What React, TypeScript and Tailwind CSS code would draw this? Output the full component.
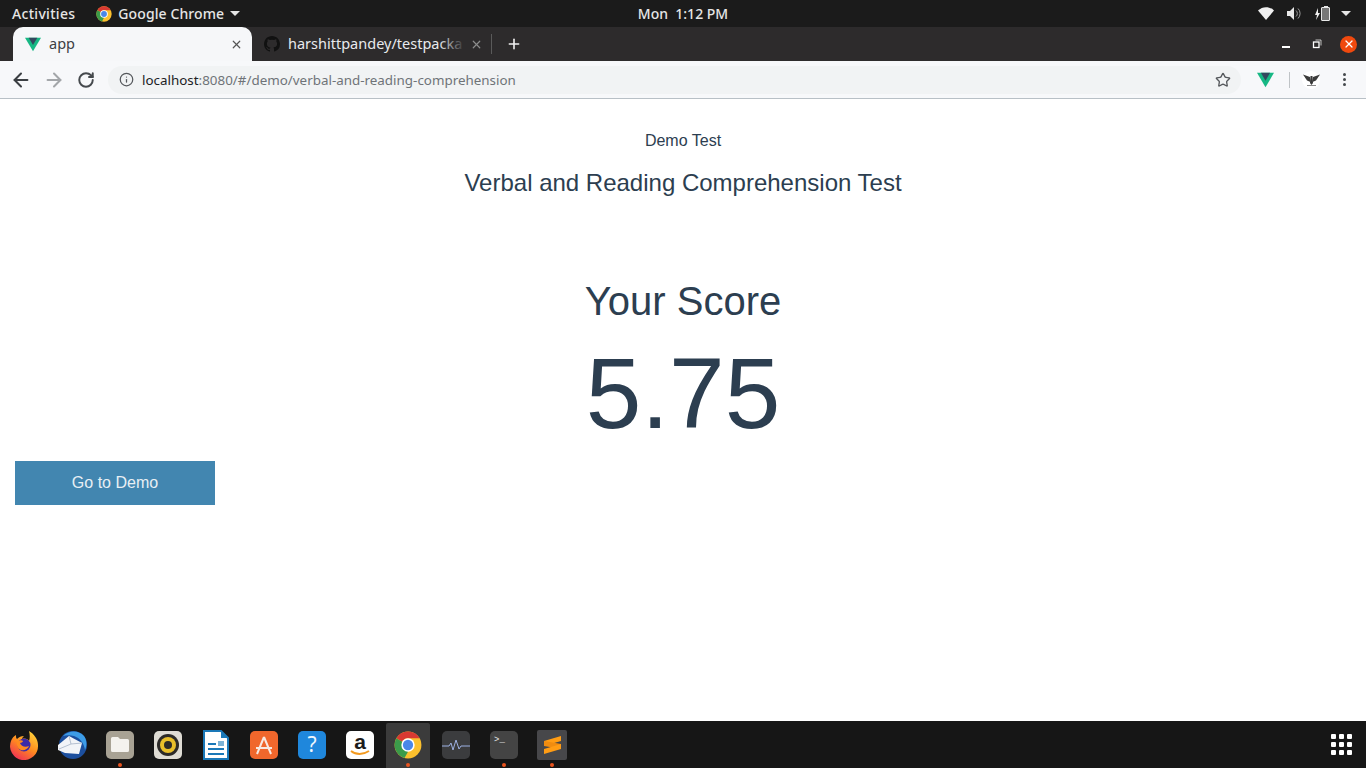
import { ArrowLeft, ArrowRight, Info, Plus, RotateCw, Star, X } from "lucide-react";
import React from "react";

const uiFont = { fontFamily: '"Noto Sans", sans-serif' };

const VueLogo = ({ size = 16 }: { size?: number }) => (
  <svg width={size} height={size} viewBox="0 0 24 24">
    <path d="M0 2.500h24L12 23z" fill="#17b884" />
    <path d="M5.500 2.500h13L12 13.600z" fill="#34495e" />
  </svg>
);

const ChromeLogo = ({ size = 16 }: { size?: number }) => (
  <svg width={size} height={size} viewBox="0 0 48 48">
    <circle cx="24" cy="24" r="23" fill="#fbc02d" />
    <path d="M24 1A23 23 0 0 1 44 12.500H24a11.500 11.500 0 0 0-10 5.800L4.100 12.500A23 23 0 0 1 24 1z" fill="#d93a32" />
    <path d="M4.100 12.500 14 18.300 24 35.500 18 46.200A23 23 0 0 1 4.100 12.500z" fill="#3b9b4a" />
    <circle cx="24" cy="24" r="11.500" fill="#fff" />
    <circle cx="24" cy="24" r="8.800" fill="#4a87e8" />
  </svg>
);

const GithubMark = () => (
  <svg width="16" height="16" viewBox="0 0 16 16" fill="#111">
    <path d="M8 0C3.600 0 0 3.600 0 8c0 3.500 2.300 6.500 5.500 7.600.4.100.5-.2.5-.4v-1.400c-2.200.5-2.700-1-2.700-1-.4-.9-.9-1.200-.9-1.200-.7-.5.100-.5.100-.5.800.1 1.200.8 1.200.8.700 1.200 1.900.9 2.300.7.100-.5.300-.9.500-1.100-1.800-.2-3.600-.9-3.600-4 0-.9.300-1.600.8-2.100-.1-.2-.4-1 .1-2.100 0 0 .7-.2 2.200.8a7.600 7.600 0 0 1 4 0c1.500-1 2.200-.8 2.200-.8.4 1.100.2 1.900.1 2.100.5.600.8 1.300.8 2.100 0 3.100-1.900 3.700-3.700 3.900.3.300.6.800.6 1.500v2.200c0 .2.100.5.600.4A8 8 0 0 0 16 8c0-4.400-3.600-8-8-8z" />
  </svg>
);

const TopBar = () => (
  <div className="flex h-[27px] items-center bg-[#1b1b1b] text-[14px] font-medium text-[#e6e6e6]" style={uiFont}>
    <div className="flex flex-1 items-center">
      <span className="ml-3 tracking-[0.3px]">Activities</span>
      <span className="ml-[21px] flex items-center gap-[6px] tracking-[0.1px]">
        <ChromeLogo />
        Google Chrome
        <svg width="10" height="5" viewBox="0 0 10 5" fill="#e6e6e6">
          <path d="M0 0h10L5 5z" />
        </svg>
      </span>
    </div>
    <span>Mon&nbsp; 1:12 PM</span>
    <div className="flex flex-1 items-center justify-end">
      <svg width="16" height="13" viewBox="0 0 16 13">
        <path d="M0 3.500C4.500-1 11.500-1 16 3.500L8 13z" fill="#f0f0f0" />
      </svg>
      <svg width="14" height="13" viewBox="0 0 14 13" fill="none" className="ml-[13px]">
        <path d="M0 4h3l4-4v13l-4-4H0z" fill="#e8e8e8" />
        <path d="M9 3.500a4 4 0 0 1 0 6M11 1.500a7 7 0 0 1 0 10" stroke="#9a9a9a" />
      </svg>
      <svg width="5" height="12" viewBox="0 0 5 12" fill="#eee" className="ml-[14px]">
        <path d="M3 0 0 7h2l-1 5 4-7H3z" />
      </svg>
      <span className="relative ml-[1px] h-[14px] w-[9px] rounded-[1px] border border-[#e8e8e8] bg-[#777]">
        <span className="absolute -top-[2px] left-[1.500px] h-[1px] w-[4px] bg-[#e8e8e8]" />
      </span>
      <svg width="10" height="5" viewBox="0 0 10 5" fill="#e6e6e6" className="ml-[11px] mr-[15px]">
        <path d="M0 0h10L5 5z" />
      </svg>
    </div>
  </div>
);

const TabStrip = () => (
  <div className="flex h-[34px] items-end bg-[#2d2b2c] text-[14.500px]" style={uiFont}>
    <div className="ml-[13px] flex h-[34px] w-[239px] items-center rounded-t-[10px] bg-[#f6f7f9] pl-[12px] pr-[9px] text-[#3c4043]">
      <VueLogo />
      <span className="-mt-[1px] ml-[8px] flex-1">app</span>
      <X size={13} strokeWidth={2.2} color="#555" />
    </div>
    <div className="flex h-[34px] w-[240px] items-center pl-[12px] text-[#e8eaed]">
      <GithubMark />
      <span className="relative -mt-[1px] ml-[8px] w-[177px] overflow-hidden whitespace-nowrap">
        harshittpandey/testpacka
        <span className="absolute inset-y-0 right-0 w-[26px] bg-gradient-to-r from-transparent to-[#2d2b2c]" />
      </span>
      <X size={13} strokeWidth={2.2} color="#8c8c8c" className="ml-[5px]" />
      <span className="ml-[8px] h-[20px] w-px bg-[#5a5a5a]" />
    </div>
    <div className="flex h-[34px] items-center pl-[14px]">
      <Plus size={16} strokeWidth={2.4} color="#f1f1f1" />
    </div>
    <div className="ml-auto flex h-[34px] items-center">
      <span className="mr-[22px] h-[1.500px] w-[8px] translate-y-[3px] bg-white" />
      <svg width="10" height="10" viewBox="0 0 10 10" fill="none" stroke="#fff" className="mr-[18px]">
        <rect x="1.500" y="3" width="5.500" height="5.500" strokeWidth="1.300" />
        <path d="M3.500 1h5.500v5.500" strokeWidth=".7" />
      </svg>
      <span className="mr-[9px] flex h-[17px] w-[17px] items-center justify-center rounded-full bg-[#f0490e]">
        <X size={12} strokeWidth={2.4} color="#fff" />
      </span>
    </div>
  </div>
);

const Toolbar = () => (
  <div className="flex h-[38px] items-center border-b border-[#b8c0c6] bg-[#f7f8fa]" style={uiFont}>
    <ArrowLeft size={22} strokeWidth={2.2} color="#3b3f43" className="ml-[10px]" />
    <ArrowRight size={22} strokeWidth={2.2} color="#a3a6a9" className="ml-[11px]" />
    <RotateCw size={18} strokeWidth={2.6} color="#45494d" className="ml-[12px]" />
    <div className="ml-[13px] flex h-[28px] w-[1133px] items-center rounded-full bg-[#f1f3f4] pl-[11px] pr-[10px] text-[13.400px]">
      <Info size={15} strokeWidth={2} color="#55585c" />
      <span className="ml-[8px] mt-[1px] text-[#202124]">localhost</span>
      <span className="mt-[1px] text-[#6f7378]">:8080/#/demo/verbal-and-reading-comprehension</span>
      <Star size={16} strokeWidth={2} color="#55585c" className="ml-auto" />
    </div>
    <span className="ml-[16px]">
      <VueLogo size={17} />
    </span>
    <span className="ml-[15px] h-[16px] w-px bg-[#bfc3c6]" />
    <span className="ml-[12px] flex h-[18px] w-[18px] items-center justify-center rounded-full bg-white">
      <svg width="17" height="14" viewBox="0 0 17 14" fill="#3a3a3a">
        <path d="M0 1.500 7 4l.5 5L4 7.500 2 4.500z" />
        <path d="M17 1.500 10 4l-.5 5L13 7.500l2-3z" />
        <path d="M7.500 3h2l.5 7-1.500 2L7 10z" />
        <path d="M4 12h9v1H4z" fill="#888" />
      </svg>
    </span>
    <span className="ml-[23px] flex flex-col gap-[2px]">
      <span className="h-[3px] w-[3px] rounded-full bg-[#45494d]" />
      <span className="h-[3px] w-[3px] rounded-full bg-[#45494d]" />
      <span className="h-[3px] w-[3px] rounded-full bg-[#45494d]" />
    </span>
  </div>
);

const Score = () => (
  <main className="flex-1 bg-white text-[#2c3e50]" style={{ fontFamily: '"Liberation Sans", Arial, sans-serif' }}>
    <div className="flex flex-col items-center pt-[33px]">
      <div className="text-[16px] leading-[18px]">Demo Test</div>
      <div className="mt-[19px] text-[24px] leading-[28px]">Verbal and Reading Comprehension Test</div>
      <div className="mt-[81px] text-[40px] leading-[46px]">Your Score</div>
      <div className="mt-[12px] text-[100px] leading-[115px]">5.75</div>
    </div>
    <button type="button" className="ml-[15px] mt-[10px] block h-[44px] w-[200px] bg-[#4286b0] text-[16px] text-[#e8eff4]">
      Go to Demo
    </button>
  </main>
);

const Tile = ({ bg, children }: { bg: string; children: React.ReactNode }) => (
  <div className={`relative flex h-[28px] w-[28px] items-center justify-center rounded-[5px] ${bg}`}>{children}</div>
);

const Dot = () => <span className="absolute bottom-[1px] left-1/2 h-[4px] w-[4px] -translate-x-1/2 rounded-full bg-[#e9541f]" />;

const dockIcons: { key: string; running?: boolean; active?: boolean; icon: React.ReactNode }[] = [
  {
    key: "firefox",
    icon: (
      <svg width="30" height="30" viewBox="0 0 30 30">
        <defs>
          <linearGradient id="fxBody" x1="0.800" y1="0" x2="0.200" y2="1">
            <stop offset="0" stopColor="#ffd33a" />
            <stop offset="0.500" stopColor="#ff8a1f" />
            <stop offset="1" stopColor="#ee2a5a" />
          </linearGradient>
        </defs>
        <path d="M20 1c5 3 9 8 9 14a14 14 0 1 1-27-4c1-3 3-5 5-6 0 2 0 3 1 4 2-2 4-3 7-3-1 1-2 2-2 3 3-1 6 0 7 2 1-3 1-6 0-10z" fill="url(#fxBody)" />
        <circle cx="15" cy="15" r="6.500" fill="#3c2aa8" />
        <path d="M8 12c2-2 5-2 6-1 0 1-2 2-3 2 1 3 5 5 9 3-1 3-5 5-8 4s-5-5-4-8z" fill="#ff8a1f" />
      </svg>
    ),
  },
  {
    key: "thunderbird",
    icon: (
      <svg width="30" height="30" viewBox="0 0 30 30">
        <circle cx="16" cy="15" r="14" fill="#1c4f9e" />
        <path d="M6 6c6-6 16-6 21 0 3 4 3 10 1 14-1-7-5-12-11-14-4-1-8-1-11 0z" fill="#3d9ce6" />
        <path d="M1 15 12 6l13 7-3 11-14-1-7-3z" fill="#f2f4f8" />
        <path d="M12 6l2 8 11-1M2 19l12-5" stroke="#a5b2c6" fill="none" strokeWidth=".8" />
      </svg>
    ),
  },
  {
    key: "files",
    running: true,
    icon: (
      <Tile bg="bg-[#a8a294]">
        <svg width="20" height="17" viewBox="0 0 20 17">
          <path d="M1 2.500A1.500 1.500 0 0 1 2.500 1H8l2 2h7.500A1.500 1.500 0 0 1 19 4.500v10a1.500 1.500 0 0 1-1.500 1.500h-15A1.500 1.500 0 0 1 1 14.500z" fill="#f4f2ee" />
        </svg>
      </Tile>
    ),
  },
  {
    key: "rhythmbox",
    icon: (
      <Tile bg="bg-[#dfdcd4]">
        <svg width="24" height="24" viewBox="0 0 24 24">
          <circle cx="12" cy="12" r="11" fill="#2c2a28" />
          <circle cx="12" cy="12" r="8" fill="#e9bf2a" />
          <circle cx="12" cy="12" r="4" fill="#2c2a28" />
        </svg>
      </Tile>
    ),
  },
  {
    key: "writer",
    icon: (
      <svg width="26" height="30" viewBox="0 0 26 30">
        <path d="M1 1h17l7 7v21H1z" fill="#fff" stroke="#1a78b8" strokeWidth="2" />
        <path d="M18 1l7 7h-7z" fill="#1a78b8" />
        <path d="M5 13h8v2H5zM5 18h16v2H5zM5 23h16v2H5z" fill="#1a78b8" />
        <path d="M15 11h6v5h-6z" fill="#7db3d6" />
      </svg>
    ),
  },
  {
    key: "software",
    icon: (
      <Tile bg="bg-[#f0672c]">
        <svg width="22" height="22" viewBox="0 0 22 22" fill="none" stroke="#f7e9e1" strokeWidth="2">
          <path d="M11 3 4 20M11 3l7 17M3 14h16" />
        </svg>
      </Tile>
    ),
  },
  {
    key: "help",
    icon: (
      <Tile bg="bg-[#1f87dc]">
        <span className="text-[21px] leading-none text-[#eef6fd]" style={uiFont}>
          ?
        </span>
      </Tile>
    ),
  },
  {
    key: "amazon",
    icon: (
      <Tile bg="bg-white">
        <span className="relative -top-[3px] text-[21px] font-bold leading-none text-[#1b1b1b]" style={{ fontFamily: '"Liberation Sans", sans-serif' }}>
          a
        </span>
        <svg width="20" height="6" viewBox="0 0 20 6" fill="none" className="absolute bottom-[3px]">
          <path d="M1 1c5 4 12 4 18 0" stroke="#f39a1f" strokeWidth="1.800" />
        </svg>
      </Tile>
    ),
  },
  { key: "chrome", active: true, running: true, icon: <ChromeLogo size={28} /> },
  {
    key: "monitor",
    icon: (
      <Tile bg="bg-[#3b3c3e]">
        <svg width="28" height="14" viewBox="0 0 28 14" fill="none" stroke="#9db0e2" strokeWidth="1">
          <path d="M0 8h7l2-3 2 7 3-10 3 9 2-3h9" />
        </svg>
      </Tile>
    ),
  },
  {
    key: "terminal",
    running: true,
    icon: (
      <Tile bg="bg-[#444444]">
        <span className="absolute left-[4px] top-[5px] text-[9px] leading-none text-[#e8e8e8]" style={{ fontFamily: '"Liberation Mono", monospace' }}>
          &gt;_
        </span>
      </Tile>
    ),
  },
  {
    key: "sublime",
    running: true,
    icon: (
      <div className="flex h-[30px] w-[30px] items-center justify-center rounded-[2px] bg-[#47474a]">
        <svg width="17" height="20" viewBox="0 0 17 20">
          <path d="M17 1v5L0 11V6z" fill="#ff9c14" />
          <path d="M0 6v5l17 3V9z" fill="#f08c10" />
          <path d="M17 9v5L0 19v-5z" fill="#ff9c14" />
        </svg>
      </div>
    ),
  },
];

const Dock = () => (
  <div className="flex h-[47px] items-center justify-between bg-[#161616]">
    <div className="flex h-full items-center">
      {dockIcons.map((item) => (
        <div key={item.key} className="relative flex h-full w-[48px] items-center justify-center">
          {item.active && <span className="absolute inset-x-[2px] bottom-0 top-[2px] rounded-t-[2px] bg-[#3b3b3b]" />}
          <span className="relative">{item.icon}</span>
          {item.running && <Dot />}
        </div>
      ))}
    </div>
    <div className="mr-[14px] grid grid-cols-3 gap-[3px]">
      {Array.from({ length: 9 }).map((_, i) => (
        <span key={i} className="h-[5px] w-[5px] rounded-[1px] bg-white" />
      ))}
    </div>
  </div>
);

export default function App() {
  return (
    <div className="flex h-[768px] w-[1366px] flex-col overflow-hidden">
      <TopBar />
      <TabStrip />
      <Toolbar />
      <Score />
      <Dock />
    </div>
  );
}
